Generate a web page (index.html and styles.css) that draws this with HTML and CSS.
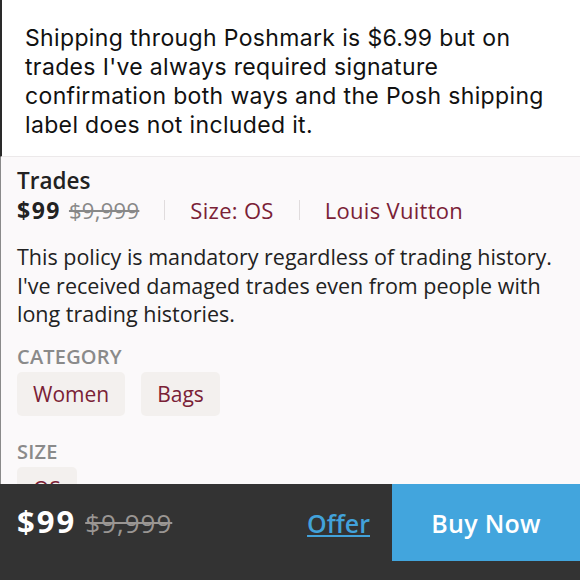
FILE: index.html
```html
<!DOCTYPE html>
<html lang="en">

<head>
    <meta charset="UTF-8">
    <meta name="viewport" content="width=device-width, initial-scale=1.0">
    <title>Listing</title>

    <link rel="stylesheet" href="styles.css">
</head>

<body>

    <div class="page">
        <div class="note">
            <p class="note__text">Shipping through Poshmark is $6.99 but on trades I've always required signature confirmation both ways and the Posh shipping label does not included it.</p>
        </div>

        <div class="listing">
            <h1 class="listing__title">Trades</h1>
            <div class="listing__meta">
                <span class="listing__price">$99</span>
                <span class="listing__original">$9,999</span>
                <span class="listing__divider"></span>
                <span class="listing__link">Size: OS</span>
                <span class="listing__divider"></span>
                <span class="listing__link">Louis Vuitton</span>
            </div>
            <p class="listing__desc">This policy is mandatory regardless of trading history. I've received damaged trades even from people with long trading histories.</p>

            <div class="listing__group">
                <div class="listing__label">CATEGORY</div>
                <div class="listing__chips">
                    <span class="chip">Women</span>
                    <span class="chip">Bags</span>
                </div>
            </div>

            <div class="listing__group listing__group--size">
                <div class="listing__label">SIZE</div>
                <div class="listing__chips">
                    <span class="chip">OS</span>
                </div>
            </div>
        </div>
    </div>

    <div class="buybar">
        <div class="buybar__prices">
            <span class="buybar__price">$99</span>
            <span class="buybar__original">$9,999</span>
        </div>
        <a class="buybar__offer" href="#">Offer</a>
        <div class="buybar__buy">Buy Now</div>
    </div>

</body>

</html>
```

FILE: styles.css
```css
* {
    box-sizing: border-box;
}

body {
    margin: 0;
    width: 580px;
    height: 580px;
    overflow: hidden;
    background-color: #fbf9fa;
    font-family: "Open Sans", "Liberation Sans", sans-serif;
}

.page {
    display: flex;
    flex-direction: column;
}

.note {
    background-color: #fff;
    border-left: 2px solid #2a2a2a;
    border-bottom: 1px solid #ece9ea;
    padding: 24px 20px 0 23px;
    height: 157px;
}

.note__text {
    margin: 0;
    font-family: Inter, "Liberation Sans", sans-serif;
    font-size: 23px;
    letter-spacing: 0.35px;
    line-height: 29px;
    color: #111;
}

.listing {
    border-left: 1px solid #8a8a8a;
    padding: 10px 16px 0;
    color: #222;
}

.listing__title {
    margin: 0;
    font-size: 22.5px;
    font-weight: 600;
    line-height: 28px;
}

.listing__meta {
    display: flex;
    align-items: center;
    height: 30px;
    font-size: 22px;
}

.listing__price {
    font-size: 23px;
    font-weight: 700;
    letter-spacing: 1.5px;
}

.listing__original {
    margin-left: 8px;
    color: #888;
    letter-spacing: 0.3px;
    text-decoration: line-through;
}

.listing__divider {
    width: 1px;
    height: 20px;
    margin: 0 25px;
    background-color: #e0dcdd;
}

.listing__link {
    color: #7a2136;
    letter-spacing: 0.3px;
}

.listing__desc {
    margin: 18px 0 0;
    font-size: 21.5px;
    line-height: 28.5px;
    color: #222;
}

.listing__group {
    margin-top: 17px;
}

.listing__group--size {
    margin-top: 25px;
}

.listing__label {
    font-size: 20px;
    font-weight: 600;
    letter-spacing: 0.2px;
    color: #8a8a8a;
    line-height: 22px;
}

.listing__chips {
    display: flex;
    gap: 16px;
    margin-top: 4px;
}

.chip {
    display: inline-block;
    padding: 8px 16px;
    border-radius: 5px;
    background-color: #f3f0ee;
    color: #7a2136;
    font-size: 21px;
    line-height: 28px;
}

.buybar {
    position: fixed;
    left: 0;
    top: 484px;
    width: 580px;
    height: 96px;
    display: flex;
    align-items: flex-start;
    background-color: #333;
}

.buybar__prices {
    flex: 1;
    display: flex;
    align-items: baseline;
    padding: 16px 0 0 17px;
}

.buybar__price {
    color: #fff;
    font-size: 31px;
    font-weight: 700;
    letter-spacing: 2px;
}

.buybar__original {
    margin-left: 9px;
    color: #9a9693;
    font-size: 26px;
    letter-spacing: 1px;
    text-decoration: line-through;
}

.buybar__offer {
    display: flex;
    align-items: center;
    height: 77px;
    margin-right: 22px;
    color: #42a2da;
    font-size: 25px;
    font-weight: 600;
}

.buybar__buy {
    display: flex;
    align-items: center;
    justify-content: center;
    width: 188px;
    height: 77px;
    background-color: #42a5dd;
    color: #fff;
    font-size: 25px;
    font-weight: 600;
    letter-spacing: 0.3px;
}
```
